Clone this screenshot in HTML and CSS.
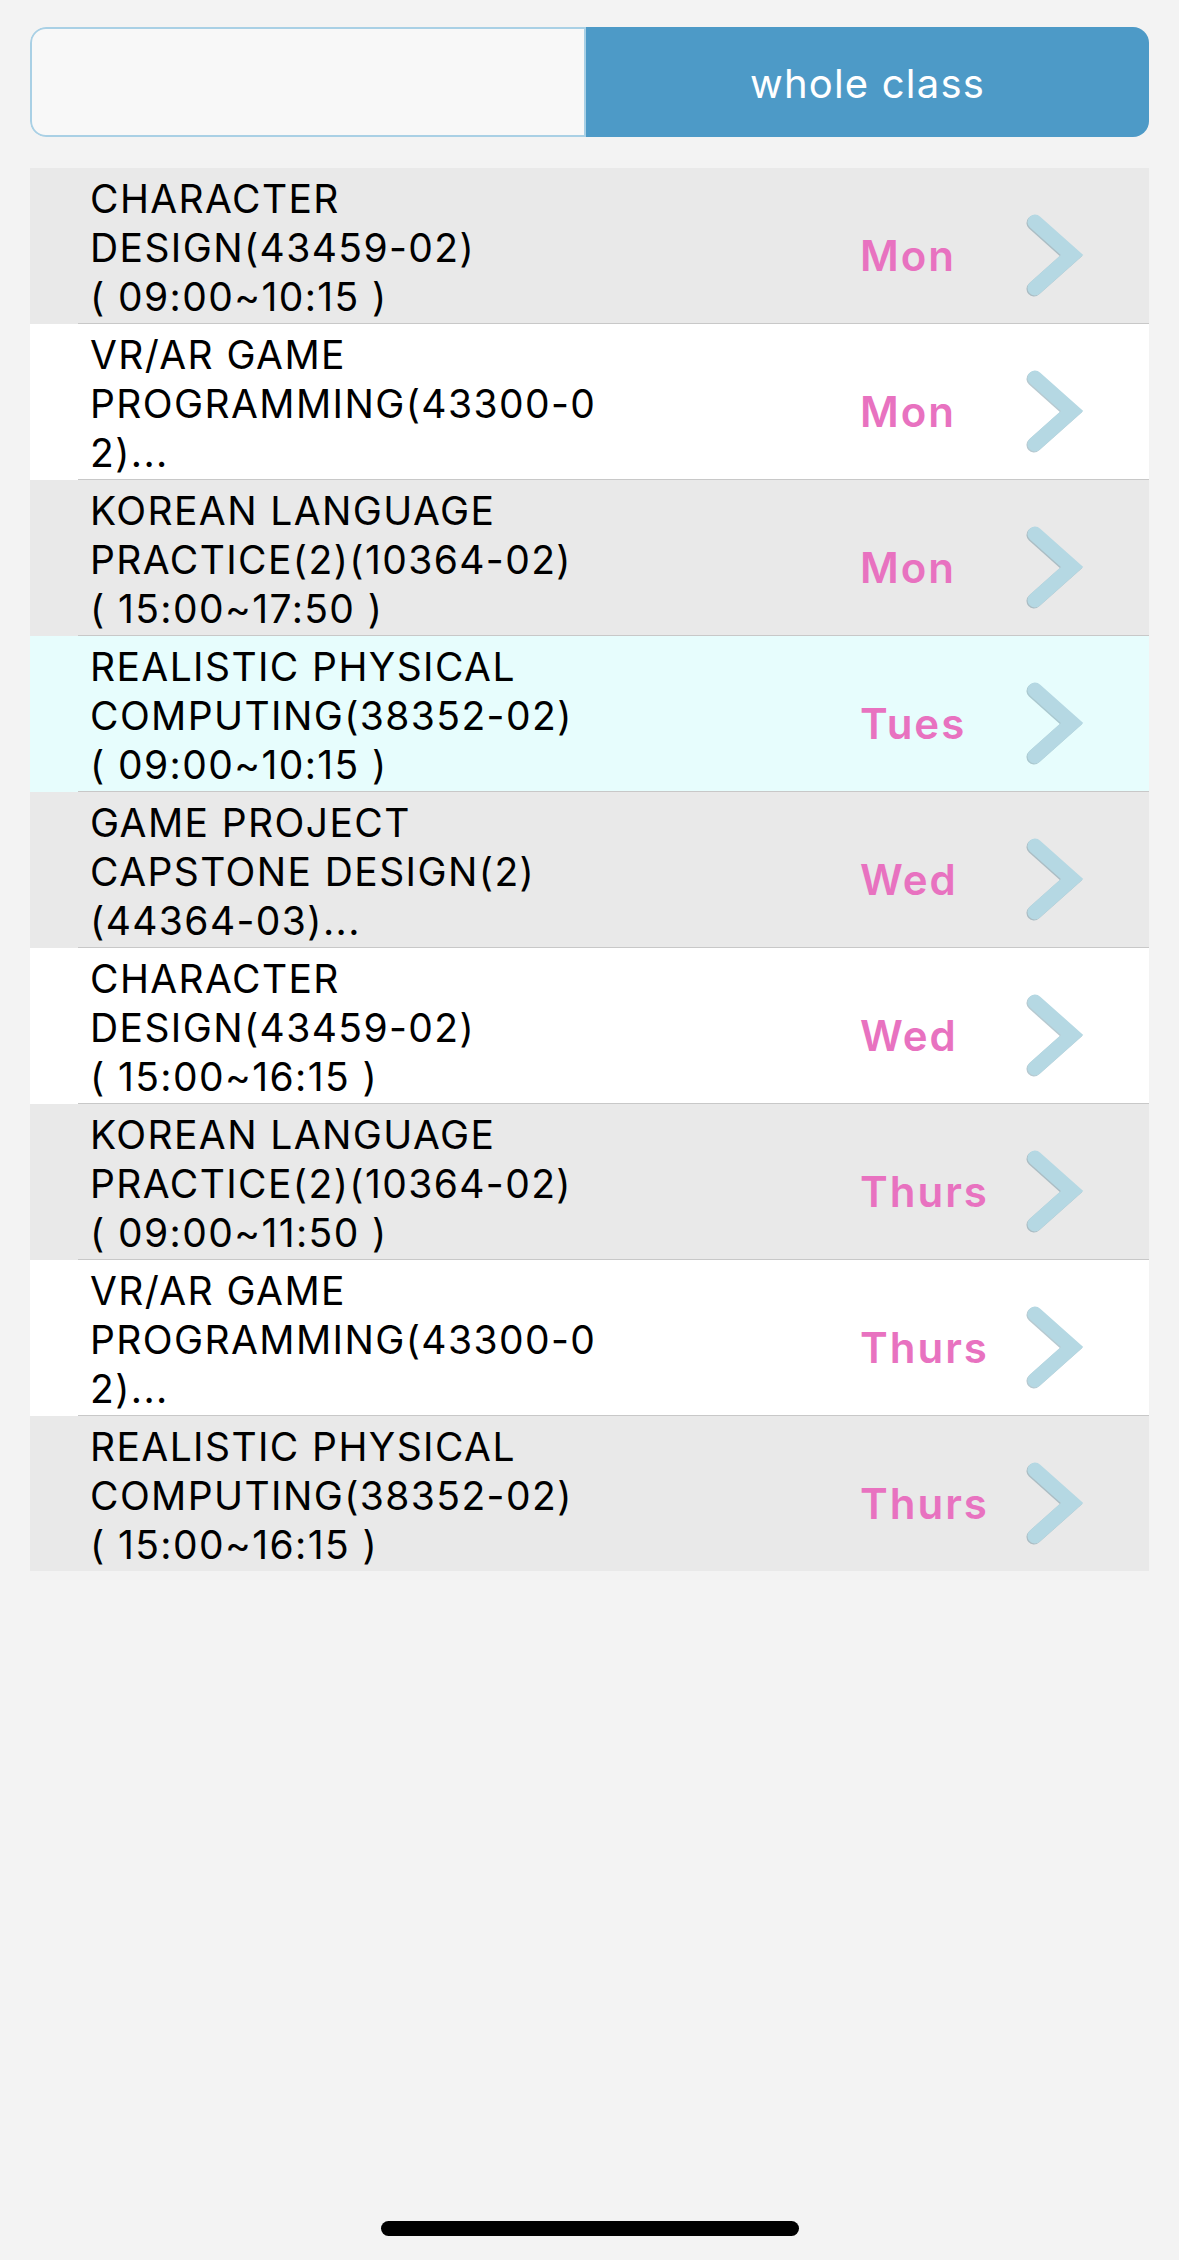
FILE: index.html
```html
<!DOCTYPE html>
<html lang="en">
<head>
<meta charset="utf-8">
<title>Class list</title>
<link rel="stylesheet" href="styles.css">
</head>
<body>
<div class="page">
  <div class="toggle">
    <div class="seg seg-off"></div>
    <div class="seg seg-on">whole class</div>
  </div>

  <ul class="list">
    <li class="row row-gray"><div class="row-inner"><div class="title">CHARACTER<br>DESIGN(43459-02)<br>( 09:00~10:15 )</div><div class="side"><span class="day">Mon</span><svg class="chev" viewBox="0 0 60 84"><path d="M9 9 L46 42 L9 75"/></svg></div></div></li>
    <li class="row row-white"><div class="row-inner"><div class="title">VR/AR GAME<br>PROGRAMMING(43300-0<br>2)...</div><div class="side"><span class="day">Mon</span><svg class="chev" viewBox="0 0 60 84"><path d="M9 9 L46 42 L9 75"/></svg></div></div></li>
    <li class="row row-gray"><div class="row-inner"><div class="title">KOREAN LANGUAGE<br>PRACTICE(2)(10364-02)<br>( 15:00~17:50 )</div><div class="side"><span class="day">Mon</span><svg class="chev" viewBox="0 0 60 84"><path d="M9 9 L46 42 L9 75"/></svg></div></div></li>
    <li class="row row-cyan"><div class="row-inner"><div class="title">REALISTIC PHYSICAL<br>COMPUTING(38352-02)<br>( 09:00~10:15 )</div><div class="side"><span class="day">Tues</span><svg class="chev" viewBox="0 0 60 84"><path d="M9 9 L46 42 L9 75"/></svg></div></div></li>
    <li class="row row-gray"><div class="row-inner"><div class="title">GAME PROJECT<br>CAPSTONE DESIGN(2)<br>(44364-03)...</div><div class="side"><span class="day">Wed</span><svg class="chev" viewBox="0 0 60 84"><path d="M9 9 L46 42 L9 75"/></svg></div></div></li>
    <li class="row row-white"><div class="row-inner"><div class="title">CHARACTER<br>DESIGN(43459-02)<br>( 15:00~16:15 )</div><div class="side"><span class="day">Wed</span><svg class="chev" viewBox="0 0 60 84"><path d="M9 9 L46 42 L9 75"/></svg></div></div></li>
    <li class="row row-gray"><div class="row-inner"><div class="title">KOREAN LANGUAGE<br>PRACTICE(2)(10364-02)<br>( 09:00~11:50 )</div><div class="side"><span class="day">Thurs</span><svg class="chev" viewBox="0 0 60 84"><path d="M9 9 L46 42 L9 75"/></svg></div></div></li>
    <li class="row row-white"><div class="row-inner"><div class="title">VR/AR GAME<br>PROGRAMMING(43300-0<br>2)...</div><div class="side"><span class="day">Thurs</span><svg class="chev" viewBox="0 0 60 84"><path d="M9 9 L46 42 L9 75"/></svg></div></div></li>
    <li class="row row-gray row-last"><div class="row-inner"><div class="title">REALISTIC PHYSICAL<br>COMPUTING(38352-02)<br>( 15:00~16:15 )</div><div class="side"><span class="day">Thurs</span><svg class="chev" viewBox="0 0 60 84"><path d="M9 9 L46 42 L9 75"/></svg></div></div></li>
  </ul>

  <div class="home-indicator"></div>
</div>
</body>
</html>
```

FILE: styles.css
```css
* {
  box-sizing: border-box;
}

html, body {
  margin: 0;
  padding: 0;
  background: #f3f3f3;
}

body {
  font-family: Inter, "Liberation Sans", Arial, sans-serif;
  color: #000;
}

.page {
  min-height: 2260px;
  display: flex;
  flex-direction: column;
  padding: 27px 30px 0;
}

/* segmented toggle */
.toggle {
  display: flex;
  height: 110px;
  border-radius: 16px;
  overflow: hidden;
}

.seg {
  display: flex;
  align-items: center;
  justify-content: center;
}

.seg-off {
  flex: 0 0 556px;
  background: #f8f8f8;
  border: 2px solid #a9d0e5;
  border-radius: 16px 0 0 16px;
}

.seg-on {
  flex: 1;
  background: #4d9ac7;
  color: #fff;
  font-size: 40px;
  letter-spacing: 1.2px;
  padding-top: 3px;
}

/* list */
.list {
  list-style: none;
  margin: 31px 0 0;
  padding: 0;
}

.row {
  padding-left: 48px;
}

.row-gray { background: #e9e9e9; }
.row-white { background: #ffffff; }
.row-cyan { background: #e7fdfd; }

.row-inner {
  display: flex;
  align-items: center;
  height: 156px;
  border-bottom: 1px solid #c8c8c8;
  padding-left: 12px;
}

.row-last .row-inner {
  border-bottom: none;
  height: 155px;
}

.title {
  flex: 1;
  font-size: 39px;
  line-height: 49px;
  letter-spacing: 1.4px;
  padding-top: 4px;
}

.side {
  display: flex;
  align-items: center;
  padding-top: 19px;
}

.day {
  width: 166px;
  font-size: 42px;
  font-weight: 600;
  letter-spacing: 2px;
  color: #e872c0;
}

.chev {
  width: 60px;
  height: 84px;
  margin-right: 63px;
  filter: drop-shadow(-1px 1.5px 0.5px rgba(95, 135, 150, 0.45));
}

.chev path {
  fill: none;
  stroke: #b5d8e3;
  stroke-width: 15;
  stroke-linecap: round;
  stroke-linejoin: miter;
}

/* home indicator */
.home-indicator {
  margin: auto auto 24px;
  width: 418px;
  height: 15px;
  border-radius: 8px;
  background: #000;
}
```
